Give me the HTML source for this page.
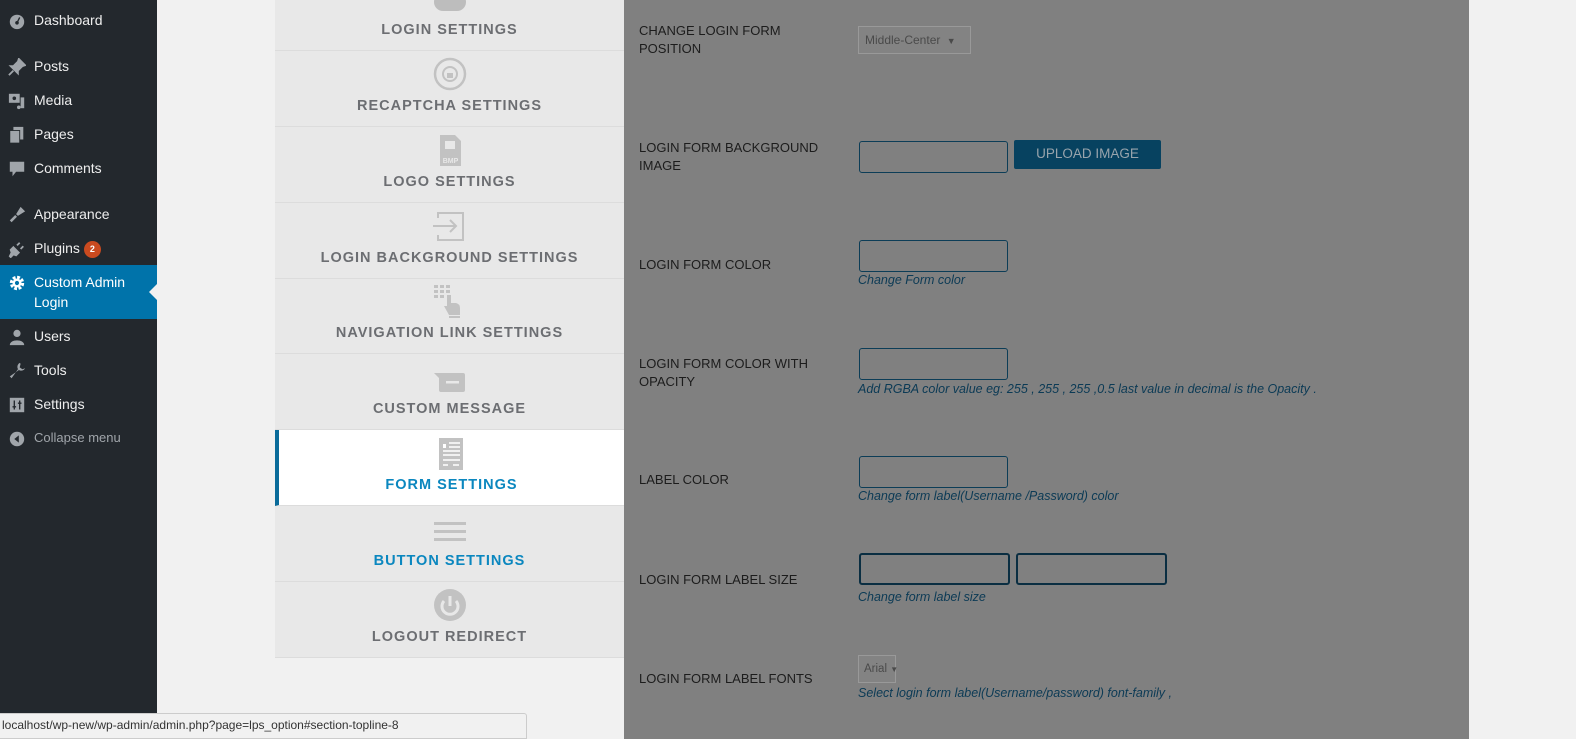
<!DOCTYPE html>
<html><head><meta charset="utf-8"><style>
*{margin:0;padding:0;box-sizing:border-box}
body{width:1576px;height:739px;overflow:hidden;background:#f1f1f1;font-family:"Liberation Sans",sans-serif;position:relative}
#side{position:absolute;left:0;top:0;width:157px;height:713px;background:#23282d}
.mi{position:absolute;left:0;width:157px;color:#eee;font-size:14px;height:34px;line-height:20px;padding:7px 0 0 34px}
.mi svg{position:absolute;left:8px;top:9px}
.cur{background:#0073aa;color:#fff;height:54px;padding-top:7px}
.cur:after{content:"";position:absolute;right:0;top:19px;border:8px solid transparent;border-right-color:#f1f1f1}
.badge{display:inline-block;background:#ca4a1f;color:#fff;border-radius:9px;font-size:9px;font-weight:bold;width:17px;height:17px;line-height:17px;text-align:center;margin-left:4px;vertical-align:1px}
#menu{position:absolute;left:275px;top:0;width:349px;height:658px;background:#e8e8e8}
.it{position:absolute;left:0;width:349px;height:76px;border-bottom:1px solid #dcdcdc;text-align:center}
.it .t{position:absolute;left:0;right:0;bottom:12px;font-size:14.5px;font-weight:bold;letter-spacing:1px;color:#6c6e72}
.it svg{position:absolute;left:158px;top:6px}
.act{background:#fff;border-left:4px solid #0a6b9a}
.blue{color:#0b87bf!important}
#panel{position:absolute;left:624px;top:0;width:845px;height:739px;background:#808080}
.lb{position:absolute;left:15px;font-size:13px;color:#1c1c1c;line-height:18px;width:190px}
.in{position:absolute;left:235px;width:149px;height:32px;border:1px solid #0c3d57;border-radius:3px}
.ds{position:absolute;left:234px;font-size:12.5px;font-style:italic;color:#0b3a55;white-space:nowrap}
.sel{position:absolute;left:234px;border:1px solid #999;background:#838383;color:#4a4a4a;font-size:12px;height:28px;line-height:26px;padding-left:6px;white-space:nowrap}
#status{position:absolute;left:0;top:713px;width:527px;height:26px;background:#f1f1f1;border:1px solid #ccc;border-left:0;border-radius:0 3px 0 0;font-size:12px;color:#333;padding:4px 0 0 2px}
</style></head><body>
<div id="side">
<div class="mi" style="top:3px"><svg width="18" height="18" viewBox="0 0 20 20"><circle cx="10" cy="11" r="8" fill="#a0a5aa"/><circle cx="10" cy="12" r="2" fill="#23282d"/><path d="M10 12 L13 6" stroke="#23282d" stroke-width="1.5"/></svg>Dashboard</div>
<div class="mi" style="top:49px"><svg width="18" height="18" viewBox="0 0 20 20"><path d="M12 1 L19 8 L16 9 L11 14 L11 17 L3 9 L6 9 L11 4Z M6 14 L1 19" fill="#a0a5aa" stroke="#a0a5aa" stroke-width="2"/></svg>Posts</div>
<div class="mi" style="top:83px"><svg width="18" height="18" viewBox="0 0 20 20"><rect x="1" y="2" width="12" height="10" fill="#a0a5aa"/><circle cx="7" cy="7" r="2" fill="#23282d"/><rect x="14" y="6" width="4" height="12" fill="#a0a5aa"/><circle cx="12" cy="17" r="2" fill="#a0a5aa"/></svg>Media</div>
<div class="mi" style="top:117px"><svg width="18" height="18" viewBox="0 0 20 20"><rect x="6" y="1" width="11" height="14" fill="#a0a5aa"/><rect x="2" y="5" width="11" height="14" fill="#a0a5aa" stroke="#23282d"/></svg>Pages</div>
<div class="mi" style="top:151px"><svg width="18" height="18" viewBox="0 0 20 20"><path d="M2 2 H18 V13 H9 L5 18 V13 H2Z" fill="#a0a5aa"/></svg>Comments</div>
<div class="mi" style="top:197px"><svg width="18" height="18" viewBox="0 0 20 20"><path d="M14 1 L19 6 L11 11 L9 9Z M8 10 L10 12 L4 18 L2 16Z" fill="#a0a5aa"/></svg>Appearance</div>
<div class="mi" style="top:231px"><svg width="18" height="18" viewBox="0 0 20 20"><path d="M6 8 L12 14 L9 17 L6 16 L3 19 L2 18 L4 14 L3 11Z M10 6 L13 3 M14 10 L17 7" fill="#a0a5aa" stroke="#a0a5aa" stroke-width="2"/></svg>Plugins<span class="badge">2</span></div>
<div class="mi cur" style="top:265px"><svg width="18" height="18" viewBox="0 0 20 20"><circle cx="10" cy="10" r="6" fill="none" stroke="#fff" stroke-width="4" stroke-dasharray="3 1.7"/><circle cx="10" cy="10" r="5" fill="#fff"/><circle cx="10" cy="10" r="2.3" fill="#0073aa"/></svg>Custom Admin<br>Login</div>
<div class="mi" style="top:319px"><svg width="18" height="18" viewBox="0 0 20 20"><circle cx="10" cy="6" r="4" fill="#a0a5aa"/><path d="M2 19 C2 12 18 12 18 19Z" fill="#a0a5aa"/></svg>Users</div>
<div class="mi" style="top:353px"><svg width="18" height="18" viewBox="0 0 20 20"><path d="M13 1 A5 5 0 0 0 12 9 L2 16 L4 18 L11 8 A5 5 0 0 0 19 7 L16 8 L13 6 L14 2Z" fill="#a0a5aa"/></svg>Tools</div>
<div class="mi" style="top:387px"><svg width="18" height="18" viewBox="0 0 20 20"><rect x="2" y="2" width="16" height="16" fill="#a0a5aa"/><path d="M7 5 V15 M13 5 V15 M5 12 H9 M11 8 H15" stroke="#23282d" stroke-width="1.5"/></svg>Settings</div>
<div class="mi" style="top:421px;color:#a0a5aa;font-size:13px"><svg width="18" height="18" viewBox="0 0 20 20"><circle cx="10" cy="10" r="8" fill="#a0a5aa"/><path d="M12 6 L7 10 L12 14Z" fill="#23282d"/></svg>Collapse menu</div>
</div>

<div id="menu">
<div class="it" style="top:-25px"><svg width="34" height="32" viewBox="0 0 34 32"><rect x="1" y="12" width="32" height="18" rx="9" fill="#bdbdbd"/></svg><div class="t">LOGIN SETTINGS</div></div>
<div class="it" style="top:51px"><svg width="34" height="34" viewBox="0 0 34 34"><circle cx="17" cy="17" r="15" fill="none" stroke="#c2c2c2" stroke-width="2.5"/><circle cx="17" cy="17" r="7" fill="none" stroke="#c2c2c2" stroke-width="2"/><rect x="14" y="16" width="6" height="5" fill="#c2c2c2"/></svg><div class="t">RECAPTCHA SETTINGS</div></div>
<div class="it" style="top:127px"><svg width="34" height="34" viewBox="0 0 34 34"><path d="M7 2 H22 L28 8 V33 H7Z" fill="#c2c2c2"/><rect x="12" y="8" width="10" height="8" fill="#e8e8e8"/><text x="17.5" y="30" font-size="7" font-weight="bold" text-anchor="middle" fill="#e8e8e8" font-family="Liberation Sans">BMP</text></svg><div class="t">LOGO SETTINGS</div></div>
<div class="it" style="top:203px"><svg width="34" height="34" viewBox="0 0 34 34"><path d="M5 9 V4 H30 V31 H5 V26" fill="none" stroke="#c2c2c2" stroke-width="2"/><path d="M0 17 H23 M17 11 L23 17 L17 23" fill="none" stroke="#c2c2c2" stroke-width="2"/></svg><div class="t">LOGIN BACKGROUND SETTINGS</div></div>
<div class="it" style="top:278px"><svg width="34" height="36" viewBox="0 0 34 36"><g fill="#c2c2c2"><rect x="1" y="1" width="4" height="3"/><rect x="7" y="1" width="4" height="3"/><rect x="13" y="1" width="4" height="3"/><rect x="1" y="6" width="4" height="3"/><rect x="7" y="6" width="4" height="3"/><rect x="13" y="6" width="4" height="3"/><rect x="1" y="11" width="4" height="3"/><rect x="7" y="11" width="4" height="3"/><path d="M14 11 H18 V19 H23 Q27 20 27 24 V31 H16 L11 22 L14 22Z"/><rect x="16" y="32" width="11" height="2"/></g></svg><div class="t">NAVIGATION LINK SETTINGS</div></div>
<div class="it" style="top:354px"><svg width="34" height="34" viewBox="0 0 34 34"><path d="M1 13 H30 Q32 13 32 15 V30 Q32 32 30 32 H8 Q6 32 6 30 V18Z" fill="#c2c2c2"/><rect x="13" y="21" width="13" height="2.5" fill="#e8e8e8"/></svg><div class="t">CUSTOM MESSAGE</div></div>
<div class="it act" style="top:430px;left:0"><svg width="34" height="34" viewBox="0 0 34 34" style="left:155px"><rect x="5" y="2" width="24" height="32" fill="#c2c2c2"/><g stroke="#fff" stroke-width="1.5"><path d="M15 7 H26 M15 11 H26 M9 15 H26 M9 19 H26 M9 24 H26 M9 29 H14 M19 29 H25"/></g><rect x="9" y="8" width="3" height="4" fill="#fff"/></svg><div class="t blue">FORM SETTINGS</div></div>
<div class="it" style="top:506px"><svg width="34" height="34" viewBox="0 0 34 34"><g fill="#c2c2c2"><rect x="1" y="10" width="32" height="3"/><rect x="1" y="18" width="32" height="3"/><rect x="1" y="26" width="32" height="3"/></g></svg><div class="t blue">BUTTON SETTINGS</div></div>
<div class="it" style="top:582px"><svg width="34" height="34" viewBox="0 0 34 34"><circle cx="17" cy="17" r="16" fill="#c2c2c2"/><path d="M11 13 A8 8 0 1 0 23 13" fill="none" stroke="#e8e8e8" stroke-width="3"/><path d="M17 8 V18" stroke="#e8e8e8" stroke-width="3"/></svg><div class="t">LOGOUT REDIRECT</div></div>
</div>

<div id="panel">
<div class="lb" style="top:22px">CHANGE LOGIN FORM<br>POSITION</div>
<div class="sel" style="top:26px;width:113px">Middle-Center <span style="font-size:9px;margin-left:3px">▼</span></div>
<div class="lb" style="top:139px">LOGIN FORM BACKGROUND<br>IMAGE</div>
<div class="in" style="top:141px"></div>
<div style="position:absolute;left:390px;top:140px;width:147px;height:29px;background:#074260;border-radius:2px;color:#98a4ac;font-size:13.5px;text-align:center;line-height:28px">UPLOAD IMAGE</div>
<div class="lb" style="top:256px">LOGIN FORM COLOR</div>
<div class="in" style="top:240px"></div>
<div class="ds" style="top:273px">Change Form color</div>
<div class="lb" style="top:355px">LOGIN FORM COLOR WITH<br>OPACITY</div>
<div class="in" style="top:348px"></div>
<div class="ds" style="top:382px">Add RGBA color value eg: 255 , 255 , 255 ,0.5 last value in decimal is the Opacity .</div>
<div class="lb" style="top:471px">LABEL COLOR</div>
<div class="in" style="top:456px"></div>
<div class="ds" style="top:489px">Change form label(Username /Password) color</div>
<div class="lb" style="top:571px">LOGIN FORM LABEL SIZE</div>
<div class="in" style="top:553px;width:151px;border:2px solid #0a2e42"></div>
<div class="in" style="top:553px;left:392px;width:151px;border:2px solid #0a2e42"></div>
<div class="ds" style="top:590px">Change form label size</div>
<div class="lb" style="top:670px">LOGIN FORM LABEL FONTS</div>
<div class="sel" style="top:655px;width:38px;padding-left:5px;font-size:11.5px">Arial <span style="font-size:8px">▼</span></div>
<div class="ds" style="top:686px">Select login form label(Username/password) font-family ,</div>
</div>

<div id="status">localhost/wp-new/wp-admin/admin.php?page=lps_option#section-topline-8</div>
</body></html>
